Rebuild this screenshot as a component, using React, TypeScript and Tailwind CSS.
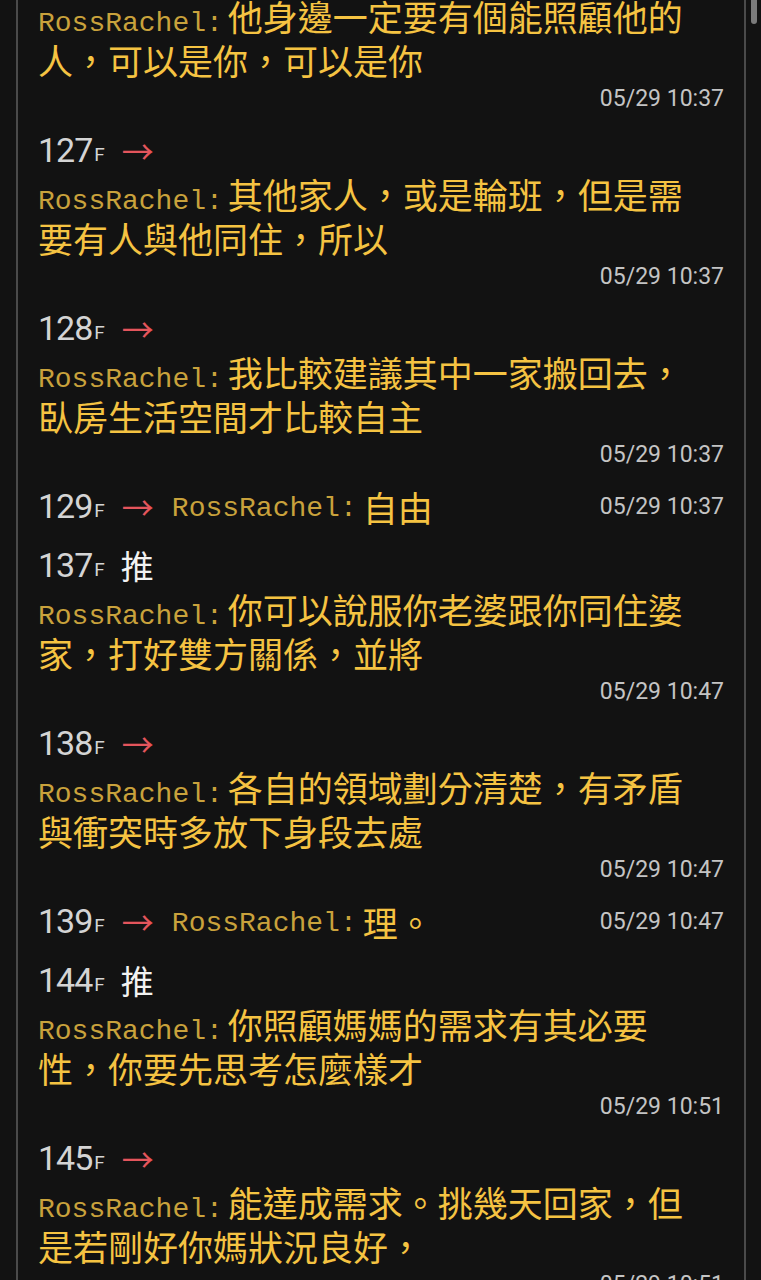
type Push = {
  floor?: string
  tag?: 'arrow' | 'push'
  lines: string[]
  time: string
  inline?: boolean
  partial?: boolean
}

const items: Push[] = [
  { partial: true, lines: ['他身邊一定要有個能照顧他的', '人，可以是你，可以是你'], time: '05/29 10:37' },
  { floor: '127', tag: 'arrow', lines: ['其他家人，或是輪班，但是需', '要有人與他同住，所以'], time: '05/29 10:37' },
  { floor: '128', tag: 'arrow', lines: ['我比較建議其中一家搬回去，', '臥房生活空間才比較自主'], time: '05/29 10:37' },
  { floor: '129', tag: 'arrow', inline: true, lines: ['自由'], time: '05/29 10:37' },
  { floor: '137', tag: 'push', lines: ['你可以說服你老婆跟你同住婆', '家，打好雙方關係，並將'], time: '05/29 10:47' },
  { floor: '138', tag: 'arrow', lines: ['各自的領域劃分清楚，有矛盾', '與衝突時多放下身段去處'], time: '05/29 10:47' },
  { floor: '139', tag: 'arrow', inline: true, lines: ['理。'], time: '05/29 10:47' },
  { floor: '144', tag: 'push', lines: ['你照顧媽媽的需求有其必要', '性，你要先思考怎麼樣才'], time: '05/29 10:51' },
  { floor: '145', tag: 'arrow', lines: ['能達成需求。挑幾天回家，但', '是若剛好你媽狀況良好，'], time: '05/29 10:51' },
]

const cjk = "font-['Noto_Sans_CJK_TC','Noto_Sans',sans-serif]"
const roboto = "font-['Roboto','Noto_Sans_CJK_TC',sans-serif]"
const mono = "font-['Liberation_Mono','Noto_Sans_CJK_TC',monospace]"

function Name() {
  return <span className={`${mono} text-[28px] text-[#c9a23c]`}>RossRachel:</span>
}

function Time({ time }: { time: string }) {
  return <span className={`${roboto} text-[23px] text-[#c4c4c4]`}>{time}</span>
}

function Header({ item }: { item: Push }) {
  return (
    <div className="flex items-center h-[44px] leading-none">
      <span className={`${roboto} text-[34px] tracking-[-1px] text-[#d4d4d4]`}>{item.floor}</span>
      <span className={`${roboto} text-[19px] text-[#d4d4d4] mt-[9px] ml-[2px]`}>F</span>
      {item.tag === 'arrow' ? (
        <span className={`${cjk} text-[32px] text-[#e4555c] ml-[17px]`}>→</span>
      ) : (
        <span className={`${cjk} text-[33px] text-[#f2f2f2] ml-[16px]`}>推</span>
      )}
      {item.inline && (
        <>
          <span className="ml-[18px] mt-[6px]">
            <Name />
          </span>
          <span className={`${cjk} text-[35px] text-[#f5c342] ml-[6px]`}>{item.lines[0]}</span>
          <span className="ml-auto">
            <Time time={item.time} />
          </span>
        </>
      )}
    </div>
  )
}

function Item({ item }: { item: Push }) {
  if (item.inline) {
    return (
      <div className="mb-[15px]">
        <Header item={item} />
      </div>
    )
  }
  return (
    <div className="mb-[12px]">
      {!item.partial && <Header item={item} />}
      <div className={`${cjk} text-[35px] text-[#f5c342] leading-[44px] whitespace-nowrap`}>
        <div className="h-[44px]">
          <Name />
          <span className="ml-[5px]">{item.lines[0]}</span>
        </div>
        <div className="h-[44px]">{item.lines[1]}</div>
      </div>
      <div className="h-[34px] leading-[34px] text-right">
        <Time time={item.time} />
      </div>
    </div>
  )
}

export default function App() {
  return (
    <div className="w-[761px] h-[1280px] overflow-hidden bg-[#121212] flex">
      <div className="w-[16px] shrink-0" />
      <div className="flex-1 border-l-2 border-r-2 border-[#4a4a4a] overflow-hidden">
        <div className="pl-[20px] pr-[20px] -mt-[6px]">
          {items.map((item, i) => (
            <Item key={i} item={item} />
          ))}
        </div>
      </div>
      <div className="w-[15px] shrink-0 flex justify-center">
        <div className="w-[6px] h-[24px] rounded-b-full bg-[#7a7a7a] ml-[1px]" />
      </div>
    </div>
  )
}
